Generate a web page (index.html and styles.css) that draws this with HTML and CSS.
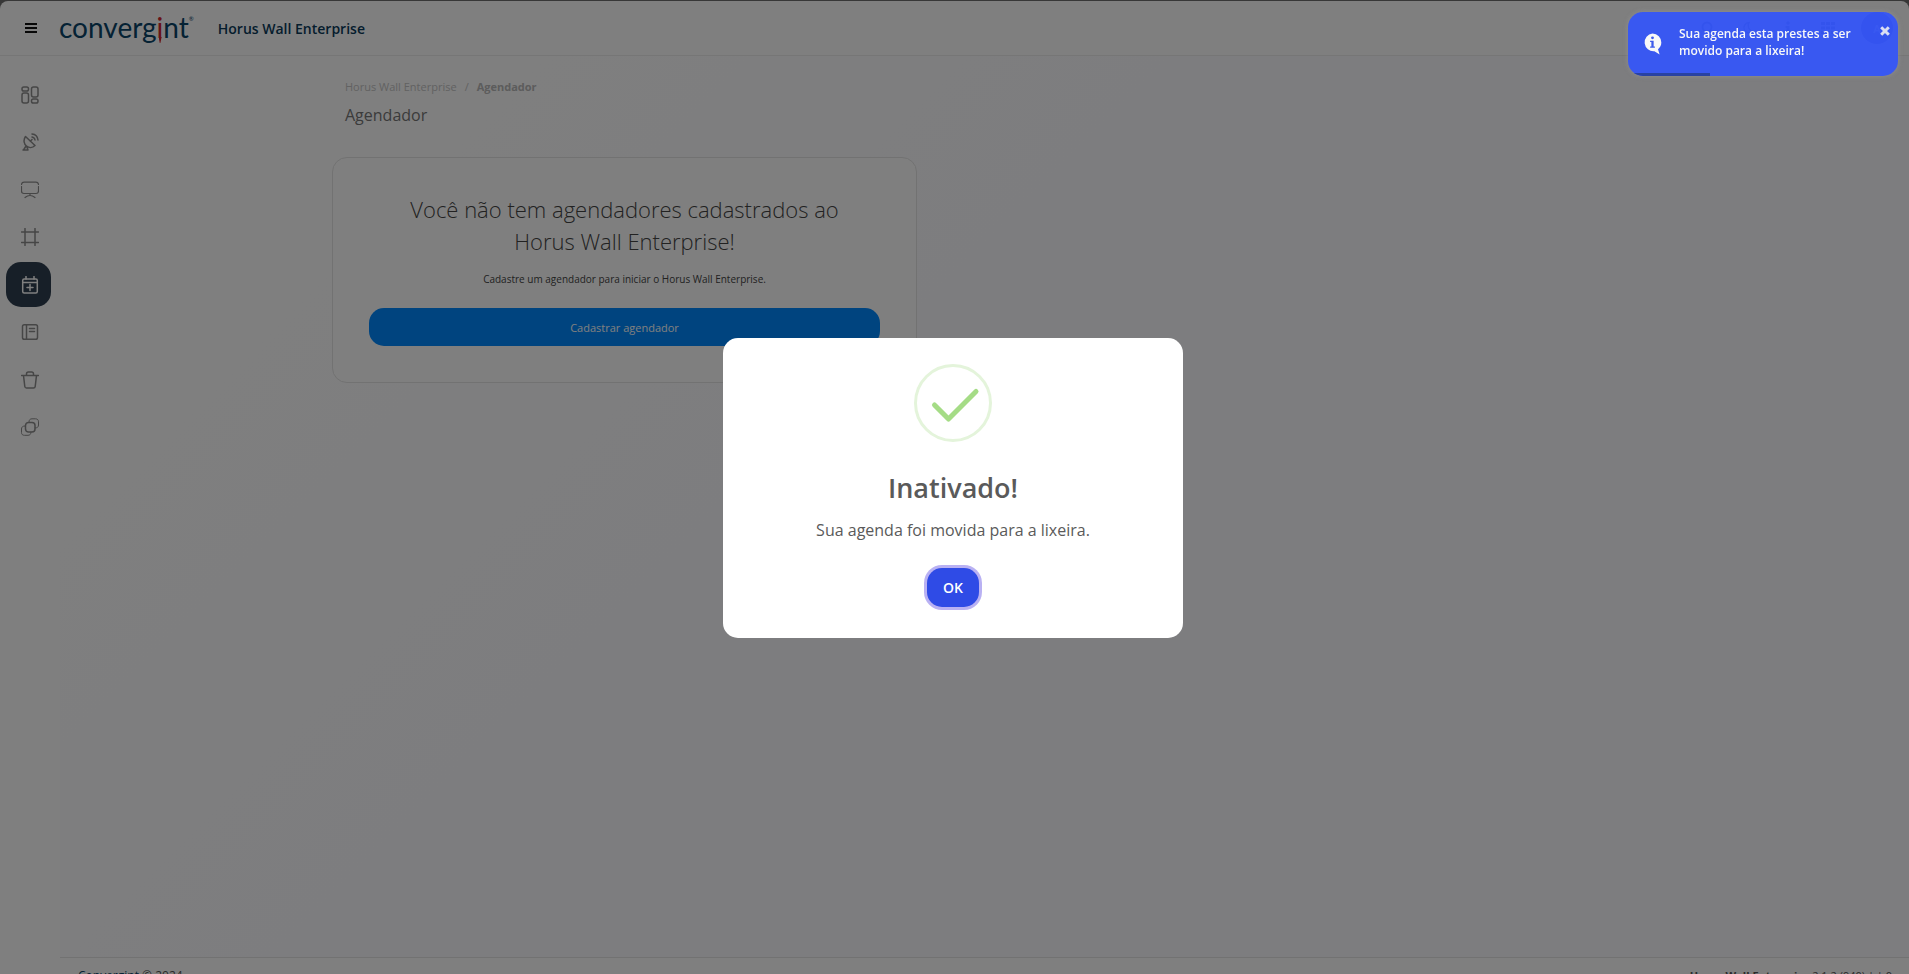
FILE: index.html
```html
<!DOCTYPE html>
<html lang="pt-BR">
<head>
<meta charset="utf-8">
<meta name="viewport" content="width=device-width, initial-scale=1">
<title>Agendador - Horus Wall Enterprise</title>
<link rel="stylesheet" href="styles.css">
</head>
<body>
<div class="app">
  <header class="topbar">
    <button class="menu-btn" type="button" aria-label="Menu">
      <svg width="12" height="12" viewBox="0 0 12 12" fill="none" stroke="currentColor" stroke-width="2"><path d="M0 2h12M0 6h12M0 10h12"/></svg>
    </button>
    <a class="logo" href="#">converg<span class="logo-i">i</span>nt<sup class="logo-reg">®</sup></a>
    <span class="product">Horus Wall Enterprise</span>
    <div class="tools">
      <button class="tool" type="button" aria-label="Pesquisar"><svg width="14" height="14" viewBox="0 0 14 14" fill="none" stroke="currentColor" stroke-width="2"><circle cx="6" cy="6" r="4.5"/><path d="M9.5 9.5l4 4"/></svg></button>
      <button class="tool" type="button" aria-label="Tema"><svg width="14" height="14" viewBox="0 0 14 14" fill="none" stroke="currentColor" stroke-width="1.5"><path d="M8 1.5A5.3 5.3 0 1 0 12 10.500A6 6 0 0 1 8 1.500z"/></svg></button>
      <button class="tool" type="button" aria-label="Informações"><svg width="14" height="14" viewBox="0 0 14 14" fill="currentColor"><circle cx="7" cy="2" r="1.800"/><path d="M4.500 5h4v6.500h1.500v2h-6v-2h1.500v-4.500h-1z"/></svg></button>
      <button class="tool" type="button" aria-label="Aplicativos"><svg width="14" height="14" viewBox="0 0 14 14" fill="currentColor"><path d="M0 1h4v3H0zM5 1h4v3H5zM10 1h4v3h-4zM0 5.500h4v3H0zM5 5.500h4v3H5zM10 5.500h4v3h-4zM0 10h4v3H0zM5 10h4v3H5zM10 10h4v3h-4z"/></svg></button>
      <button class="avatar" type="button">A</button>
    </div>
  </header>

  <div class="body">
    <nav class="sidebar" aria-label="Principal">
      <a class="nav-item" href="#" aria-label="Painel"><svg viewBox="0 0 18 18"><rect x="1" y="1" width="6.500" height="4" rx="1.800"/><rect x="1" y="7" width="6.500" height="10" rx="2"/><rect x="10.500" y="1" width="6.500" height="10" rx="2"/><rect x="10.500" y="13" width="6.500" height="4" rx="1.800"/></svg></a>
      <a class="nav-item" href="#" aria-label="Antenas"><svg viewBox="0 0 18 18"><path d="M4.500 3.500C2 7 3 11 5.500 13s6 2 8.500-.5zM9.300 8.200l1.700-1.700M5 13l-2.500 4M2 17h5l-1.200-3.500M11 4c1.800.3 2.700 1.200 3 3M11 1c3.500.3 5.600 2.400 6 6"/></svg></a>
      <a class="nav-item" href="#" aria-label="Monitores"><svg class="thin" viewBox="0 0 18 18"><path d="M.5 3.500C.7 1.800 1.500 1.200 3 1.200h12c1.500 0 2.300.6 2.500 2.300M17.500 5.500v4.500c0 1.800-.9 2.500-2.500 2.500H3C1.400 12.500.5 11.800.5 10V5.500M9 12.500v2M4 16.500c1.500-1.200 3-2 5-2s3.500.8 5 2"/></svg></a>
      <a class="nav-item" href="#" aria-label="Molduras"><svg viewBox="0 0 18 18"><path d="M4 .5v17M14 .5v17M.5 4h17M.5 14.500h17"/></svg></a>
      <a class="nav-item active" href="#" aria-label="Agendador" aria-current="page"><svg viewBox="0 0 18 18"><rect x="1.700" y="3" width="14.600" height="14" rx="1.500"/><path d="M1.700 6.500h14.600M5 .5V3M13 .5V3M9 8.500v6M6 11.500h6"/></svg></a>
      <a class="nav-item" href="#" aria-label="Registros"><svg viewBox="0 0 18 18"><rect x="1.500" y="1.700" width="15" height="14.600" rx="1.800"/><path d="M5.500 1.700v14.600M8.500 5.500h5M8.500 8.500h5"/></svg></a>
      <a class="nav-item" href="#" aria-label="Lixeira"><svg viewBox="0 0 18 18"><path d="M.5 4.500h17M2.500 4.500l1.300 11c.1 1 .7 1.500 1.700 1.500h7c1 0 1.600-.5 1.700-1.500l1.300-11M5.500 4.500V3c0-1.300.6-1.900 1.900-1.900h3.200c1.300 0 1.900.6 1.900 1.900v1.500"/></svg></a>
      <a class="nav-item" href="#" aria-label="Grupos"><svg viewBox="0 0 18 18"><rect x="4.500" y="4.500" width="9.500" height="9.500" rx="3"/><path class="faint" d="M8 4.500V4C8 2 9 .8 11 .8h3.500c2 0 3 1.200 3 3V7c0 2-1.200 3-3.500 3M4.500 8H4C1.800 8 .5 9 .5 11v3.500c0 1.800 1 2.800 3 2.800H7c1.800 0 3-1 3-3.300"/></svg></a>
    </nav>

    <div class="page">
      <main class="content">
        <nav class="breadcrumb" aria-label="Trilha">
          <a href="#">Horus Wall Enterprise</a><span>/</span><strong>Agendador</strong>
        </nav>
        <h1 class="page-title">Agendador</h1>
        <section class="card">
          <h2 class="card-title">Você não tem agendadores cadastrados ao Horus Wall Enterprise!</h2>
          <p class="card-text">Cadastre um agendador para iniciar o Horus Wall Enterprise.</p>
          <button class="primary" type="button">Cadastrar agendador</button>
        </section>
      </main>
      <footer class="footer">
        <span class="copyright"><a href="#">Convergint</a> © 2024</span>
        <span><strong>Horus Wall Enterprise</strong> 2.1.2 (940) | | 0</span>
      </footer>
    </div>
  </div>
</div>

<div class="backdrop">
  <div class="modal" role="dialog" aria-modal="true" aria-labelledby="modal-title">
    <svg class="check" width="78" height="78" viewBox="0 0 78 78" fill="none"><circle cx="39" cy="39" r="37.500" stroke="#e4f4db" stroke-width="3"/><path d="M20.500 41l14 14L62 27.500" stroke="#a5dc86" stroke-width="5" stroke-linecap="round" stroke-linejoin="round"/></svg>
    <h2 class="modal-title" id="modal-title">Inativado!</h2>
    <p class="modal-text">Sua agenda foi movida para a lixeira.</p>
    <button class="ok" type="button">OK</button>
  </div>
</div>

<div class="toast" role="status">
  <svg class="toast-icon" width="19" height="22" viewBox="0 0 20 22"><path fill="#fff" d="M10 0a9.300 9.300 0 0 1 9.300 9.500c0 3-1.300 5.300-3.500 7L17.500 22l-5.500-3.500A9.300 9.300 0 1 1 10 0z"/><circle cx="10" cy="4.500" r="1.500" fill="#3a59f2"/><path fill="#3a59f2" d="M7.500 7.500h3.700v6h1.300V15h-5v-1.500h1.300V9H7.500z"/></svg>
  <p class="toast-text">Sua agenda esta prestes a ser movido para a lixeira!</p>
  <button class="toast-close" type="button" aria-label="Fechar"><svg width="10" height="10" viewBox="0 0 10 10" stroke="currentColor" stroke-width="3"><path d="M1.200 1.200l7.600 7.600M8.800 1.200L1.200 8.800"/></svg></button>
  <span class="toast-progress"></span>
</div>
</body>
</html>
```

FILE: styles.css
```css
* { box-sizing: border-box; }

html { height: 100%; }

body {
  margin: 0;
  height: 100%;
  padding-top: 1px;
  overflow: hidden;
  background: #6e6e6e;
  font-family: "Open Sans", sans-serif;
  font-size: 11px;
  color: #555;
}

h1, h2, p { margin: 0; }
a { color: inherit; text-decoration: none; }
button { font: inherit; border: 0; padding: 0; cursor: pointer; }

.app {
  display: flex;
  flex-direction: column;
  min-height: calc(100% + 16px);
  border-radius: 8px;
  background: #fff;
}

.topbar {
  display: flex;
  align-items: center;
  height: 55px;
  padding: 0 16px 0 25px;
  border-bottom: 1px solid #ececec;
}

.menu-btn {
  display: flex;
  background: none;
  color: #111;
}

.logo {
  display: flex;
  margin-left: 22px;
  padding-bottom: 2px;
  font-family: Lato, sans-serif;
  font-size: 28px;
  line-height: 32px;
  color: #0a4468;
}

.logo-i {
  position: relative;
  color: #d0242c;
}

.logo-i::after {
  content: "";
  position: absolute;
  left: 2px;
  top: 26px;
  width: 3px;
  height: 6px;
  background: #d0242c;
  clip-path: polygon(0 0, 100% 0, 60% 100%, 40% 100%);
}

.logo-reg {
  font-size: 6px;
  line-height: 16px;
}

.product {
  margin-left: 24px;
  font-size: 14px;
  font-weight: 600;
  color: #0a3a5a;
}

.tools {
  display: flex;
  align-items: center;
  gap: 26px;
  margin-left: auto;
  color: #0a4468;
}

.tool { display: flex; background: none; color: inherit; }

.avatar {
  width: 32px;
  height: 32px;
  border-radius: 50%;
  background: #2b3a9c;
  color: #fff;
  font-weight: 600;
}

.body { display: flex; flex: 1; }

.sidebar {
  display: flex;
  flex-direction: column;
  justify-content: space-between;
  flex: none;
  width: 60px;
  height: 394px;
  padding: 16px 6px 0;
}

.nav-item {
  display: flex;
  align-items: center;
  width: 45px;
  height: 45px;
  padding-left: 15px;
  border-radius: 15px;
  color: #8c8c8c;
}

.nav-item svg {
  width: 18px;
  height: 18px;
  fill: none;
  stroke: currentColor;
  stroke-width: 1.5;
  stroke-linecap: round;
  stroke-linejoin: round;
}

.nav-item svg.thin { stroke-width: 1.2; }
.nav-item .faint { stroke-width: 1; }
.nav-item.active { background: #2f3f50; color: #fff; }

.page {
  display: flex;
  flex-direction: column;
  flex: 1;
  background: linear-gradient(135deg, #fff 10%, #fbfbfe 40%);
}

.content {
  flex: 1;
  padding: 22px 24px 24px 272px;
}

.breadcrumb {
  display: flex;
  gap: 8px;
  padding-left: 13px;
  line-height: 18px;
  color: #c4c4c4;
}

.breadcrumb strong { color: #b8b8b8; }

.page-title {
  padding: 8px 0 0 13px;
  font-size: 16px;
  font-weight: 400;
  line-height: 22px;
  color: #777;
}

.card {
  max-width: 585px;
  margin-top: 31px;
  padding: 35px 36px 36px;
  border: 1px solid #e4e4e4;
  border-radius: 15px;
  background: #fff;
  text-align: center;
}

.card-title {
  font-size: 22px;
  font-weight: 300;
  line-height: 32px;
  padding: 0 36px;
  color: #444;
}

.card-text {
  margin-top: 15px;
  font-size: 10px;
  line-height: 14px;
  color: #444;
}

.primary {
  width: 100%;
  height: 38px;
  margin-top: 22px;
  border-radius: 15px;
  background: #0088ff;
  color: #fff;
}

.footer {
  display: flex;
  justify-content: space-between;
  height: 33px;
  padding: 10px 17px 0 18px;
  border-top: 1px solid #e4e4e4;
  background: #fff;
  line-height: 16px;
}

.copyright { font-size: 12px; }
.footer a { color: #0a4468; }

.backdrop {
  position: fixed;
  inset: 0;
  display: flex;
  align-items: center;
  justify-content: center;
  padding: 2px 3px 0 0;
  background: rgba(0, 0, 0, .5);
}

.modal {
  display: flex;
  flex-direction: column;
  align-items: center;
  width: 460px;
  padding: 26px 20px 31px;
  border-radius: 15px;
  background: #fff;
  color: #5a5a5a;
}

.modal-title {
  margin-top: 27px;
  font-size: 27px;
  font-weight: 600;
  line-height: 38px;
}

.modal-text {
  margin-top: 11px;
  font-size: 16px;
  line-height: 24px;
}

.ok {
  width: 52px;
  height: 39px;
  margin-top: 26px;
  border-radius: 15px;
  background: #2f4be6;
  box-shadow: 0 0 0 3px #b9b1f3;
  color: #fff;
  font-size: 14px;
  font-weight: 600;
}

.toast {
  position: fixed;
  top: 12px;
  right: 11px;
  display: flex;
  align-items: flex-start;
  width: 270px;
  padding: 13px 8px 17px 15px;
  border-radius: 15px;
  background: #3657f8;
  box-shadow: 0 0 5px rgba(150, 150, 150, .8);
  color: #fff;
  opacity: .95;
  overflow: hidden;
}

.toast-icon { flex: none; margin-top: 8px; }

.toast-text {
  flex: 1;
  margin-left: 17px;
  font-size: 12px;
  font-weight: 600;
  line-height: 17px;
}

.toast-close {
  display: flex;
  margin-top: 1px;
  background: none;
  color: #e4e8fb;
}

.toast-progress {
  position: absolute;
  left: 0;
  bottom: 0;
  width: 82px;
  height: 3px;
  background: #2540a5;
}
```
